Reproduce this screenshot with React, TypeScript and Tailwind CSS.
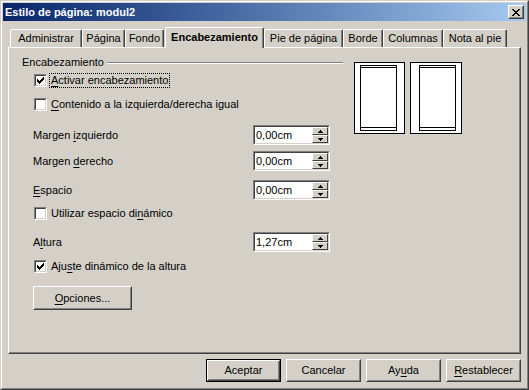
import * as React from "react"

// classic 3D frames
const raisedOuter = "border border-t-white border-l-white border-b-[#404040] border-r-[#404040]"
const raisedInner = "border border-t-[#d4d0c8] border-l-[#d4d0c8] border-b-[#808080] border-r-[#808080]"
const sunkenOuter = "border border-t-[#808080] border-l-[#808080] border-b-white border-r-white"
const sunkenInner = "border border-t-[#404040] border-l-[#404040] border-b-[#d4d0c8] border-r-[#d4d0c8]"

function Key({ children }: { children: React.ReactNode }) {
  return <span className="underline underline-offset-[2px]">{children}</span>
}

function CheckMark() {
  const cols = [2, 3, 4, 3, 2, 1, 0]
  return (
    <svg width="7" height="7" viewBox="0 0 7 7" shapeRendering="crispEdges">
      {cols.map((y, x) => (
        <rect key={x} x={x} y={y} width="1" height="3" fill="#000" />
      ))}
    </svg>
  )
}

function CheckBox({ checked }: { checked?: boolean }) {
  return (
    <div className={`w-[13px] h-[13px] shrink-0 ${sunkenOuter}`}>
      <div className={`w-full h-full bg-white flex items-center justify-center ${sunkenInner}`}>
        {checked && <CheckMark />}
      </div>
    </div>
  )
}

function Arrow({ up }: { up?: boolean }) {
  return (
    <svg width="5" height="3" viewBox="0 0 5 3" shapeRendering="crispEdges">
      {up ? (
        <path d="M2 0h1v1h1v1h1v1H0V2h1V1h1z" fill="#000" />
      ) : (
        <path d="M0 0h5v1H4v1H3v1H2V2H1V1H0z" fill="#000" />
      )}
    </svg>
  )
}

function SpinButton({ up }: { up?: boolean }) {
  return (
    <div className={`h-[8px] w-full bg-[#d4d0c8] flex items-center justify-center ${raisedOuter}`}>
      <Arrow up={up} />
    </div>
  )
}

function SpinField({ value }: { value: string }) {
  return (
    <div className={`w-[77px] h-[20px] ${sunkenOuter}`}>
      <div className={`w-full h-full bg-white flex ${sunkenInner}`}>
        <span className="flex-1 pl-px self-center">{value}</span>
        <div className="w-[16px] flex flex-col">
          <SpinButton up />
          <SpinButton />
        </div>
      </div>
    </div>
  )
}

function Button({ children, isDefault, className }: { children: React.ReactNode; isDefault?: boolean; className?: string }) {
  const inner = (
    <div className={`w-full h-full ${raisedOuter}`}>
      <div className={`w-full h-full flex items-center justify-center ${raisedInner}`}>{children}</div>
    </div>
  )
  return (
    <div className={className}>
      {isDefault ? <div className="w-full h-full border border-black">{inner}</div> : inner}
    </div>
  )
}

function FieldRow({ label, value, className }: { label: React.ReactNode; value: string; className?: string }) {
  return (
    <div className={`flex items-center justify-between h-[20px] pl-[11px] w-[308px] ${className ?? ""}`}>
      <span>{label}</span>
      <SpinField value={value} />
    </div>
  )
}

function CheckRow({ label, checked, focused, className }: { label: React.ReactNode; checked?: boolean; focused?: boolean; className?: string }) {
  return (
    <div className={`flex items-center h-[16px] pl-[12px] ${className ?? ""}`}>
      <CheckBox checked={checked} />
      {focused ? (
        <span className="ml-[2px] pl-px pr-px border border-dotted border-black leading-[13px]">{label}</span>
      ) : (
        <span className="ml-[4px]">{label}</span>
      )}
    </div>
  )
}

function CloseGlyph() {
  const px = [
    "XX....XX",
    ".XX..XX.",
    "..XXXX..",
    "...XX...",
    "..XXXX..",
    ".XX..XX.",
    "XX....XX",
  ]
  return (
    <svg width="8" height="7" viewBox="0 0 8 7" shapeRendering="crispEdges">
      {px.flatMap((row, y) =>
        row.split("").map((c, x) => (c === "X" ? <rect key={`${x}-${y}`} x={x} y={y} width="1" height="1" fill="#000" /> : null))
      )}
    </svg>
  )
}

function PagePreview() {
  return (
    <svg width="109" height="72" viewBox="0 0 109 72" shapeRendering="crispEdges">
      {/* left page */}
      <rect x="0.5" y="0.5" width="50" height="71" fill="#fff" stroke="#000" />
      <rect x="6.5" y="3.5" width="36" height="65" fill="#fff" stroke="#000" />
      <line x1="6" y1="5.5" x2="43" y2="5.5" stroke="#000" />
      <line x1="6" y1="65.5" x2="43" y2="65.5" stroke="#000" />
      {/* right page */}
      <rect x="56.5" y="0.5" width="51" height="71" fill="#fff" stroke="#000" />
      <rect x="65.5" y="3.5" width="36" height="65" fill="#fff" stroke="#000" />
      <line x1="65" y1="5.5" x2="102" y2="5.5" stroke="#000" />
      <line x1="65" y1="65.5" x2="102" y2="65.5" stroke="#000" />
    </svg>
  )
}

const tabs = [
  { label: "Administrar", w: "w-[72px]" },
  { label: "Página", w: "w-[43px]" },
  { label: "Fondo", w: "w-[39px]" },
  { label: "Encabezamiento", w: "w-[99px]", active: true },
  { label: "Pie de página", w: "w-[79px]" },
  { label: "Borde", w: "w-[40px]" },
  { label: "Columnas", w: "w-[60px]" },
  { label: "Nota al pie", w: "w-[64px]" },
]

export default function App() {
  return (
    <div className="w-[529px] h-[390px] bg-[#d4d0c8] text-black text-[11px] leading-[13px] font-['Liberation_Sans',Arial,sans-serif] border border-t-[#d4d0c8] border-l-[#d4d0c8] border-b-[#404040] border-r-[#404040]">
      <div className="h-full flex flex-col p-px border border-t-white border-l-white border-b-[#808080] border-r-[#808080]">
        {/* Title bar */}
        <div className="h-[18px] shrink-0 flex items-center justify-between pl-[2px] pr-[2px] bg-linear-to-r from-[#0a246a] to-[#a6caf0]">
          <span className="text-white font-bold">Estilo de página: modul2</span>
          <div className={`w-[16px] h-[14px] bg-[#d4d0c8] ${raisedOuter}`}>
            <div className={`w-full h-full flex items-center justify-center ${raisedInner}`}>
              <CloseGlyph />
            </div>
          </div>
        </div>

        <div className="flex-1 flex flex-col px-[5px] pt-[6px] pb-[5px]">
          {/* Tabs */}
          <div className="h-[20px] flex items-end pl-[2px] relative z-10">
            {tabs.map((t) =>
              t.active ? (
                <div
                  key={t.label}
                  className={`${t.w} ml-px h-[21px] -mb-px bg-[#d4d0c8] font-bold flex items-center justify-center pb-[2px] rounded-t-[2px] border-t border-l border-white border-r border-r-[#404040] shadow-[inset_-1px_0_0_#808080]`}
                >
                  {t.label}
                </div>
              ) : (
                <div
                  key={t.label}
                  className={`${t.w} h-[18px] bg-[#d4d0c8] flex items-center justify-center rounded-t-[2px] border-t border-l border-white border-r border-r-[#404040] shadow-[inset_-1px_0_0_#808080]`}
                >
                  {t.label}
                </div>
              )
            )}
          </div>

          {/* Tab panel */}
          <div className="h-[307px] shrink-0 flex pl-[13px] pt-[8px] border border-t-white border-l-white border-b-[#404040] border-r-[#404040] shadow-[inset_-1px_-1px_0_#808080]">
            <div className="w-[321px] flex flex-col">
              <div className="h-[13px] flex items-center">
                <span>Encabezamiento</span>
                <div className="flex-1 ml-[3px] h-[2px] border-t border-t-[#808080] border-b border-b-white" />
              </div>
              <CheckRow className="mt-[3px]" checked focused label={<><Key>A</Key>ctivar encabezamiento</>} />
              <CheckRow className="mt-[8px]" label={<><Key>C</Key>ontenido a la izquierda/derecha igual</>} />
              <FieldRow className="mt-[13px]" value="0,00cm" label={<>Margen <Key>i</Key>zquierdo</>} />
              <FieldRow className="mt-[6px]" value="0,00cm" label={<>Margen <Key>d</Key>erecho</>} />
              <FieldRow className="mt-[9px]" value="0,00cm" label={<><Key>E</Key>spacio</>} />
              <CheckRow className="mt-[5px]" label={<>Utilizar espacio di<Key>n</Key>ámico</>} />
              <FieldRow className="mt-[11px]" value="1,27cm" label={<>A<Key>l</Key>tura</>} />
              <CheckRow className="mt-[6px]" checked label={<>Aju<Key>s</Key>te dinámico de la altura</>} />
              <Button className="ml-[11px] mt-[12px] w-[99px] h-[24px]">
                <span><Key>O</Key>pciones...</span>
              </Button>
            </div>
            <div className="ml-[11px] mt-[6px]">
              <PagePreview />
            </div>
          </div>

          {/* Dialog buttons */}
          <div className="mt-[5px] h-[23px] flex justify-end gap-[5px]">
            <Button isDefault className="w-[75px] h-[23px]">Aceptar</Button>
            <Button className="w-[75px] h-[23px]">Cancelar</Button>
            <Button className="w-[75px] h-[23px]">
              <span>Ay<Key>u</Key>da</span>
            </Button>
            <Button className="w-[75px] h-[23px]">
              <span><Key>R</Key>establecer</span>
            </Button>
          </div>
        </div>
      </div>
    </div>
  )
}
